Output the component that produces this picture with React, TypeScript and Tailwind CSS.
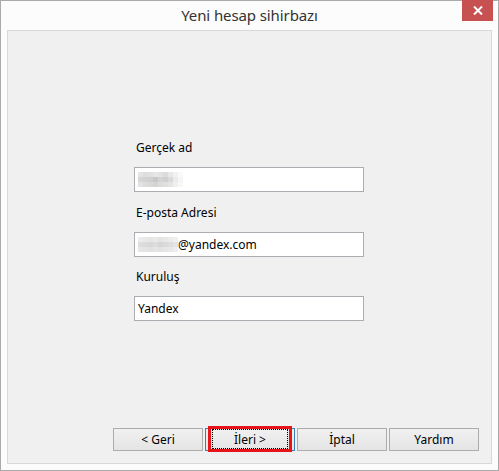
import React from 'react';

const blurA = [
  ['#e4e4e4', '#dedede', '#e0e0e0', '#e6e6e6', '#e2e2e2', '#dcdcdc', '#e8e8e8', '#f2f2f2', '#fafafa', '#ffffff'],
  ['#d6d6d6', '#d2d2d2', '#cfcfcf', '#c8c8c8', '#d4d4d4', '#d0d0d0', '#dadada', '#ececec', '#f6f6f6', '#ffffff'],
  ['#e2e2e2', '#dcdcdc', '#d8d8d8', '#d4d4d4', '#dcdcdc', '#e0e0e0', '#e4e4e4', '#f0f0f0', '#f8f8f8', '#ffffff'],
];

const blurB = [
  ['#ececec', '#e8e8e8', '#e6e6e6', '#e9e9e9', '#e4e4e4', '#e8e8e8', '#ececec', '#f0f0f0'],
  ['#dedede', '#dadada', '#d8d8d8', '#dcdcdc', '#d6d6d6', '#dadada', '#dedede', '#e4e4e4'],
  ['#e6e6e6', '#e4e4e4', '#e0e0e0', '#e4e4e4', '#e2e2e2', '#e6e6e6', '#e8e8e8', '#eeeeee'],
];

const Mosaic = ({ rows }: { rows: string[][] }) => (
  <div className="flex flex-col">
    {rows.map((row, r) => (
      <div key={r} className="flex">
        {row.map((c, i) => (
          <div key={i} className="w-[5px] h-[5px]" style={{ backgroundColor: c }} />
        ))}
      </div>
    ))}
  </div>
);

const Field = ({ label, children, gapTop }: { label: string; children: React.ReactNode; gapTop: string }) => (
  <div className={gapTop}>
    <div className="h-4 leading-4 pl-[2px] text-[12px] text-black">{label}</div>
    <div className="mt-[11px] h-[25px] w-[230px] border border-[#abadb3] bg-white flex items-center pl-[3px] text-[12px] text-black">
      {children}
    </div>
  </div>
);

const Btn = ({ label, focused }: { label: string; focused?: boolean }) => (
  <div className="relative">
    <button
      className={`w-[90px] h-[23px] border text-[12px] text-black bg-[linear-gradient(#f0f0f0,#e5e5e5)] flex items-center justify-center ${
        focused ? 'border-[#3c7fb1]' : 'border-[#acacac]'
      }`}
    >
      {label}
    </button>
    {focused && (
      <>
        <div className="absolute left-[7px] right-[7px] top-[1px] bottom-[2px] border border-dotted border-black pointer-events-none" />
        <div className="absolute left-[3px] right-[3px] top-[-2px] bottom-[-1px] border-[3px] border-[#e8141a] pointer-events-none" />
      </>
    )}
  </div>
);

export default function App() {
  return (
    <div className="w-[499px] h-[471px] border border-[#aaaaaa] bg-[#fcfcfc] flex flex-col font-['Noto_Sans',sans-serif]">
      <div className="relative h-[29px] flex items-center justify-center">
        <span className="text-[15px] text-[#333333] tracking-[-0.1px]">Yeni hesap sihirbazı</span>
        <div className="absolute top-[-1px] right-[5px] w-[31px] h-[21px] bg-[#c75050] flex items-center justify-center">
          <svg width="10" height="9" viewBox="0 0 10 9">
            <path d="M1 0.5 L9 8.5 M9 0.5 L1 8.5" stroke="white" strokeWidth="2" />
          </svg>
        </div>
      </div>
      <div className="mx-[6px] mb-[6px] flex-1 border border-[#d9d9d9] bg-[#f0f0f0] flex flex-col">
        <div className="ml-[126px] pt-[109px]">
          <Field label="Gerçek ad" gapTop="">
            <Mosaic rows={blurA} />
          </Field>
          <Field label="E-posta Adresi" gapTop="mt-[13px]">
            <Mosaic rows={blurB} />
            <span>@yandex.com</span>
          </Field>
          <Field label="Kuruluş" gapTop="mt-[12px]">
            <span>Yandex</span>
          </Field>
        </div>
        <div className="mt-auto flex justify-end gap-[2px] pr-[12px] pb-[12px]">
          <Btn label="< Geri" />
          <Btn label="İleri >" focused />
          <Btn label="İptal" />
          <Btn label="Yardım" />
        </div>
      </div>
    </div>
  );
}
